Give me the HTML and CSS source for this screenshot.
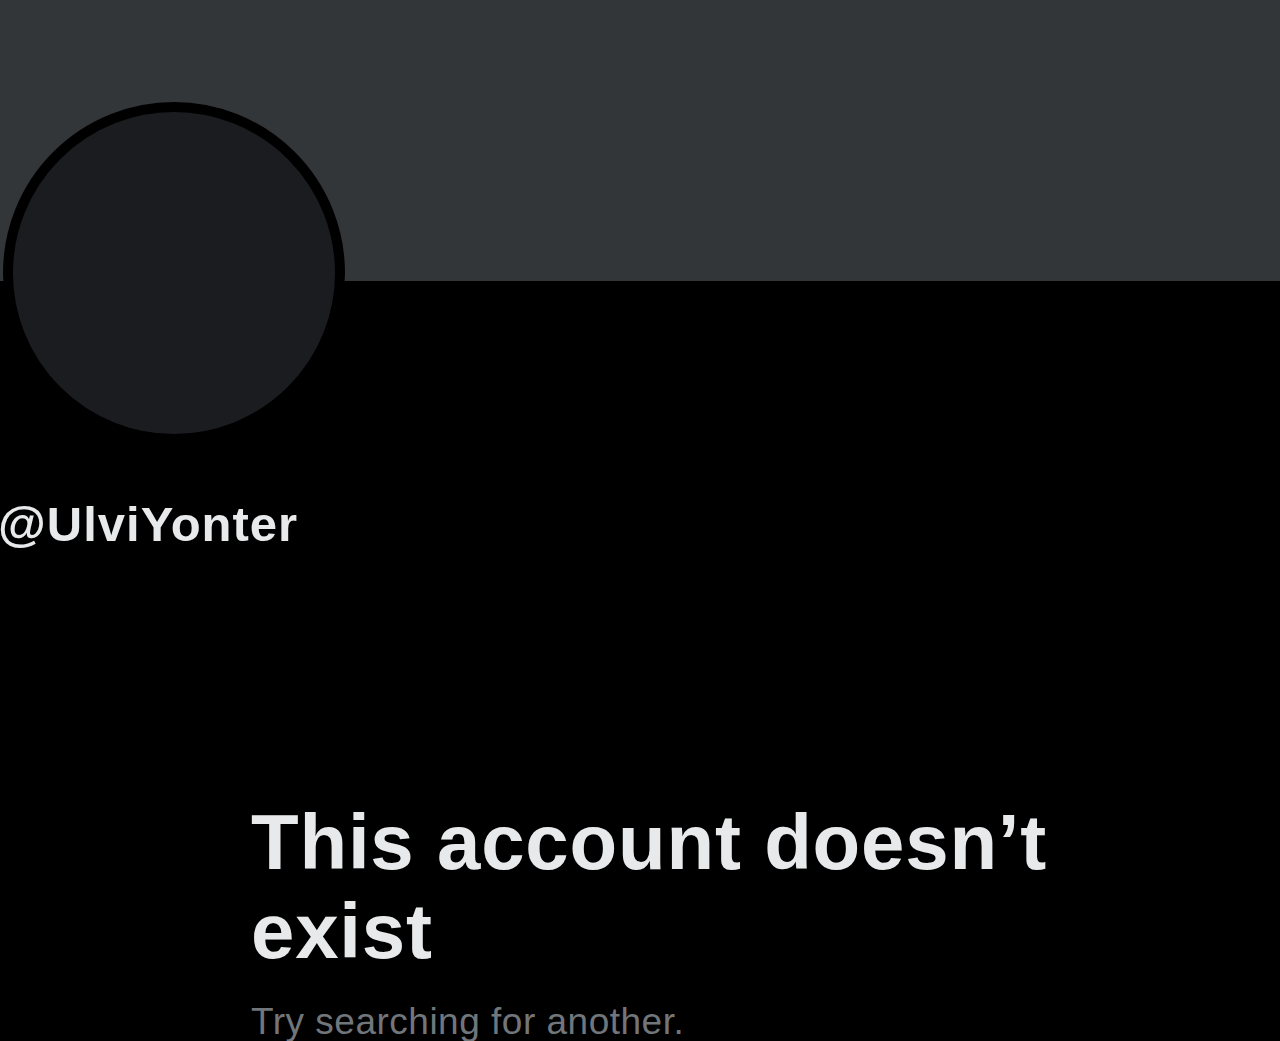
FILE: index.html
```html
<!DOCTYPE html>
<html lang="en">
<head>
<meta charset="utf-8">
<title>Profile</title>
<link rel="stylesheet" href="styles.css">
</head>
<body>
<main class="page">
  <div class="banner"></div>
  <div class="avatar"></div>
  <div class="handle">@UlviYonter</div>
  <section class="empty">
    <h1 class="empty-title">This account doesn’t exist</h1>
    <p class="empty-sub">Try searching for another.</p>
  </section>
</main>
</body>
</html>
```
FILE: styles.css
```css
html, body {
  margin: 0;
  padding: 0;
  background: #000;
}
body {
  font-family: "Liberation Sans", Arial, sans-serif;
  color: #e7e9ea;
  overflow: hidden;
  height: 1041px;
}
.page {
  display: flex;
  flex-direction: column;
}
.banner {
  height: 281px;
  background: #333639;
}
.avatar {
  width: 322px;
  height: 322px;
  margin-top: -179px;
  margin-left: 3px;
  border: 10px solid #000;
  border-radius: 50%;
  background: #1b1c20;
}
.handle {
  margin-top: 52px;
  margin-left: -2px;
  font-size: 49px;
  line-height: 56px;
  font-weight: 700;
  letter-spacing: 1px;
  color: #e7e9ea;
}
.empty {
  margin-top: 246px;
  padding-left: 251px;
  width: 840px;
}
.empty-title {
  margin: 0;
  font-size: 78px;
  line-height: 89px;
  font-weight: 700;
  letter-spacing: 0.8px;
  color: #e7e9ea;
}
.empty-sub {
  margin: 24px 0 0;
  font-size: 37px;
  line-height: 44px;
  letter-spacing: 0.5px;
  color: #71767b;
}
```
